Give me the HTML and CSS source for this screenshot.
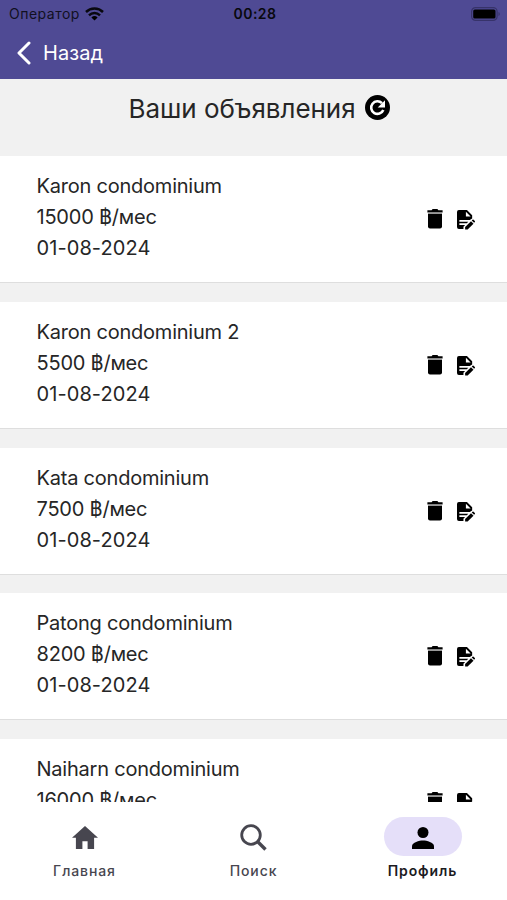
FILE: index.html
```html
<!DOCTYPE html>
<html lang="ru">
<head>
  <meta charset="UTF-8" />
  <meta name="viewport" content="width=device-width, initial-scale=1" />
  <title>Ваши объявления</title>
  <link rel="stylesheet" href="styles.css">
</head>
<body>
  <!-- icons used in every card -->
  <svg class="sprite">
    <symbol id="trash" viewBox="0 0 16 20">
      <path d="M0.4 1.2h4.2L5.6 0h4.800l1 1.200h4.200v2.400H0.4z" />
      <path d="M1 5h14v12.400a2 2 0 0 1-2 2H3a2 2 0 0 1-2-2z" />
      <path class="lid-gap" d="M1 3.600h14V5H1z" />
    </symbol>
    <symbol id="edit" viewBox="0 0 19 21">
      <path d="M2 0h8.500L16 5.500V9L13.500 10.500H2.500v1.800h9.400L10.300 14H2.500v1.800h6L6.800 17.500V20H2a2 2 0 0 1-2-2V2a2 2 0 0 1 2-2zM9.400 1.800v5h5z" />
      <path d="M8.600 18l6.200-6.200 2.600 2.600-6.200 6.200H8.600z" />
      <path d="M15.600 11l0.800-0.800a.8.8 0 0 1 1.100 0l1.300 1.300a.8.8 0 0 1 0 1.100l-0.800 0.800z" />
    </symbol>
  </svg>

  <header class="header">
    <div class="status">
      <div class="carrier">
        <span>Оператор</span>
        <svg width="19" height="14" viewBox="0 0 19 14">
          <path d="M1 5a12.200 12.200 0 0 1 17 0M4 8.300a8 8 0 0 1 11 0" fill="none" stroke="#08080e" stroke-width="2.500" />
          <path d="M6.400 10.500a4.600 4.600 0 0 1 6.200 0L9.500 13.500z" />
        </svg>
      </div>
      <span class="time">00:28</span>
      <div class="battery">
        <svg width="31" height="14" viewBox="0 0 31 14">
          <rect x="1.600" y="0.600" width="25.500" height="12.800" rx="4" fill="none" stroke="#37336a" stroke-width="1.200" />
          <rect x="3.200" y="2.400" width="22.300" height="9.200" rx="1.600" />
          <path d="M28.500 5a2.200 2.200 0 0 1 0 4z" fill="#37336a" />
        </svg>
      </div>
    </div>
    <a class="back" href="#">
      <svg width="14" height="24" viewBox="0 0 14 24">
        <path d="M12 2L2 12l10 10" fill="none" stroke="#fff" stroke-width="3" stroke-linecap="round" stroke-linejoin="round" />
      </svg>
      <span>Назад</span>
    </a>
  </header>

  <main class="content">
    <div class="title">
      <h1>Ваши объявления</h1>
      <svg width="25" height="25" viewBox="0 0 25 25">
        <circle cx="12.500" cy="12.500" r="12.500" />
        <path d="M17 8.200a6.300 6.300 0 1 0 1.300 6.800" fill="none" stroke="#fff" stroke-width="2.600" />
        <path d="M20 5.200v7.300h-7.300z" fill="#fff" />
      </svg>
    </div>

    <div class="list">
      <div class="card">
        <div class="info">
          <p>Karon condominium</p>
          <p>15000 ฿/мес</p>
          <p class="date">01-08-2024</p>
        </div>
        <div class="actions">
          <svg class="trash"><use href="#trash" /></svg>
          <svg class="edit"><use href="#edit" /></svg>
        </div>
      </div>
      <div class="card">
        <div class="info">
          <p>Karon condominium 2</p>
          <p>5500 ฿/мес</p>
          <p class="date">01-08-2024</p>
        </div>
        <div class="actions">
          <svg class="trash"><use href="#trash" /></svg>
          <svg class="edit"><use href="#edit" /></svg>
        </div>
      </div>
      <div class="card">
        <div class="info">
          <p>Kata condominium</p>
          <p>7500 ฿/мес</p>
          <p class="date">01-08-2024</p>
        </div>
        <div class="actions">
          <svg class="trash"><use href="#trash" /></svg>
          <svg class="edit"><use href="#edit" /></svg>
        </div>
      </div>
      <div class="card">
        <div class="info">
          <p>Patong condominium</p>
          <p>8200 ฿/мес</p>
          <p class="date">01-08-2024</p>
        </div>
        <div class="actions">
          <svg class="trash"><use href="#trash" /></svg>
          <svg class="edit"><use href="#edit" /></svg>
        </div>
      </div>
      <div class="card">
        <div class="info">
          <p>Naiharn condominium</p>
          <p>16000 ฿/мес</p>
        </div>
        <div class="actions">
          <svg class="trash"><use href="#trash" /></svg>
          <svg class="edit"><use href="#edit" /></svg>
        </div>
      </div>
    </div>
  </main>

  <nav class="tabs">
    <a class="tab" href="#">
      <span class="pill">
        <svg width="26" height="23" viewBox="0 0 26 23">
          <path d="M13 0l13 11.700h-3.900V23h-6.500v-7.800h-5.200V23H3.900V11.700H0z" />
        </svg>
      </span>
      <span>Главная</span>
    </a>
    <a class="tab" href="#">
      <span class="pill">
        <svg width="27" height="27" viewBox="0 0 27 27">
          <circle cx="11" cy="11" r="9.300" fill="none" stroke="#47464f" stroke-width="2.800" />
          <path d="M17.500 17.500l8 8" stroke="#47464f" stroke-width="3.400" />
        </svg>
      </span>
      <span>Поиск</span>
    </a>
    <a class="tab active" href="#">
      <span class="pill">
        <svg width="22" height="22" viewBox="0 0 22 22">
          <circle cx="11" cy="5.500" r="5.500" />
          <path d="M0 22v-2.800c0-3.700 7.300-5.600 11-5.600s11 1.900 11 5.600V22z" />
        </svg>
      </span>
      <span>Профиль</span>
    </a>
  </nav>
</body>
</html>
```
FILE: styles.css
```css
* { box-sizing: border-box; }
body {
  font-family: Inter, "Noto Sans", sans-serif;
  margin: 0;
  height: 900px;
  display: flex;
  flex-direction: column;
  overflow: hidden;
  background: #fff;
  color: #262626;
}
svg { display: block; flex: none; }
p, h1 { margin: 0; font-weight: 400; }
a { text-decoration: none; color: inherit; }
.sprite { display: none; }

.header {
  height: 79px;
  flex: none;
  background: #4f4a94;
}
.status {
  display: grid;
  grid-template-columns: 1fr auto 1fr;
  align-items: center;
  height: 27px;
  padding: 0 6px 0 9px;
  font-size: 14px;
  color: #11101f;
}
.carrier {
  display: flex;
  align-items: center;
  gap: 5px;
  letter-spacing: 0.5px;
}
.time {
  font-weight: 600;
  letter-spacing: 0.5px;
  color: #08080e;
}
.battery { justify-self: end; }
.back {
  display: flex;
  align-items: center;
  gap: 12px;
  width: max-content;
  height: 51px;
  padding-left: 17px;
  font-size: 20px;
  letter-spacing: 0.1px;
  color: #fff;
}

.content {
  flex: 1;
  min-height: 0;
  overflow: hidden;
  background: #f1f1f1;
}
.title {
  display: flex;
  justify-content: center;
  gap: 9px;
  height: 77px;
  padding: 16px 0 0 11px;
}
.title h1 {
  font-size: 26px;
  line-height: 28px;
  letter-spacing: -0.05px;
}
.list {
  display: flex;
  flex-direction: column;
  gap: 18.8px;
}
.card {
  display: flex;
  justify-content: space-between;
  height: 127px;
  flex: none;
  padding: 15px 32px 0 36.5px;
  background: #fff;
  border-bottom: 1px solid #dedede;
}
.info {
  font-size: 20px;
  line-height: 31px;
  letter-spacing: -0.22px;
}
.date { letter-spacing: 0.08px; }
.actions {
  display: flex;
  gap: 14px;
  padding-top: 38px;
}
.trash { width: 16px; height: 20px; }
.edit { width: 18px; height: 20px; margin-top: 1px; }
.lid-gap { fill: #999; }

.tabs {
  display: grid;
  grid-template-columns: repeat(3, 1fr);
  flex: none;
  height: 98px;
  padding-top: 15px;
  background: #fff;
}
.tab {
  display: flex;
  flex-direction: column;
  align-items: center;
  gap: 5px;
  font-size: 14px;
  font-weight: 500;
  line-height: 20px;
  letter-spacing: 0.9px;
  color: #47464f;
  fill: #47464f;
}
.pill {
  display: flex;
  align-items: center;
  justify-content: center;
  width: 78px;
  height: 39px;
  padding-top: 2px;
  border-radius: 20px;
}
.tab.active {
  font-weight: 600;
  color: #1c1b1f;
  fill: #000;
}
.active .pill { background: #e5dff9; }
```
